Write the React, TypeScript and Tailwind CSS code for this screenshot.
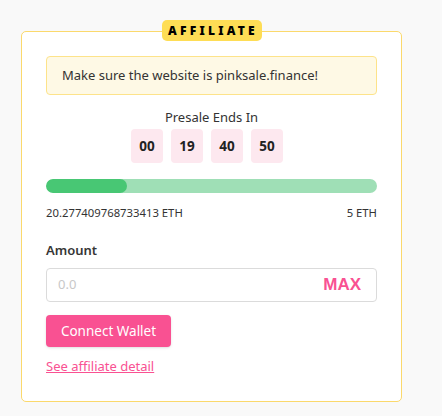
import React from 'react';

const font = { fontFamily: '"Noto Sans", "Open Sans", sans-serif' };

const Countdown = ({ parts }: { parts: string[] }) => (
  <div className="flex justify-center gap-2 mt-[2px] pr-[9px]">
    {parts.map((p, i) => (
      <div
        key={i}
        className="w-8 h-[34px] rounded-[4px] bg-[#fde8ef] flex items-center justify-center text-[13.5px] font-bold text-[#222]"
      >
        {p}
      </div>
    ))}
  </div>
);

export default function App() {
  return (
    <div className="min-h-[416px] bg-[#f9f9f9] pt-[31px] pl-[21px]" style={font}>
      <div className="relative w-[381px] h-[371px] bg-white border border-[#fbd96c] rounded-[5px] px-6 pt-6 text-[#363636]">
        <div className="absolute -top-[12px] left-1/2 -translate-x-1/2 w-[100px] h-[21px] rounded-[5px] bg-[#fedd55] flex items-center justify-center text-[12px] font-black tracking-[0.27em] pl-[3px] text-black">
          AFFILIATE
        </div>

        <div className="h-[39px] bg-[#fef9e5] border border-[#fde38a] rounded-[4px] flex items-center px-[15px] text-[13px] text-[#333]">
          Make sure the website is pinksale.finance!
        </div>

        <div className="mt-3 text-center text-[13px] leading-5 text-[#333]">Presale Ends In</div>
        <Countdown parts={['00', '19', '40', '50']} />

        <div className="mt-4 h-[14px] rounded-full bg-[#9fdfb6] overflow-hidden">
          <div className="h-full w-[81px] rounded-full bg-[#48c774]" />
        </div>

        <div className="mt-3 flex justify-between text-[11.3px] leading-4 text-[#333]">
          <span>20.277409768733413 ETH</span>
          <span>5 ETH</span>
        </div>

        <div className="mt-[19px] text-[13px] leading-5 font-semibold text-[#363636]">Amount</div>

        <div className="mt-2 h-[34px] border border-[#dbdbdb] rounded-[4px] flex items-center justify-between pl-[11px] pr-[15px]">
          <input
            className="outline-none text-[13px] placeholder-[#c8c8c8] bg-transparent w-40"
            placeholder="0.0"
          />
          <span
            className="text-[17px] font-bold text-[#f95192]"
            style={{ fontFamily: '"Liberation Sans", Arial, sans-serif' }}
          >
            MAX
          </span>
        </div>

        <button className="mt-[13px] h-8 w-[125px] rounded-[4px] bg-[#f95192] text-white text-[13.5px] flex items-center justify-center shadow-sm">
          Connect Wallet
        </button>

        <a href="#" className="block mt-[9px] text-[13px] leading-5 text-[#f95192] underline w-fit">
          See affiliate detail
        </a>
      </div>
    </div>
  );
}
